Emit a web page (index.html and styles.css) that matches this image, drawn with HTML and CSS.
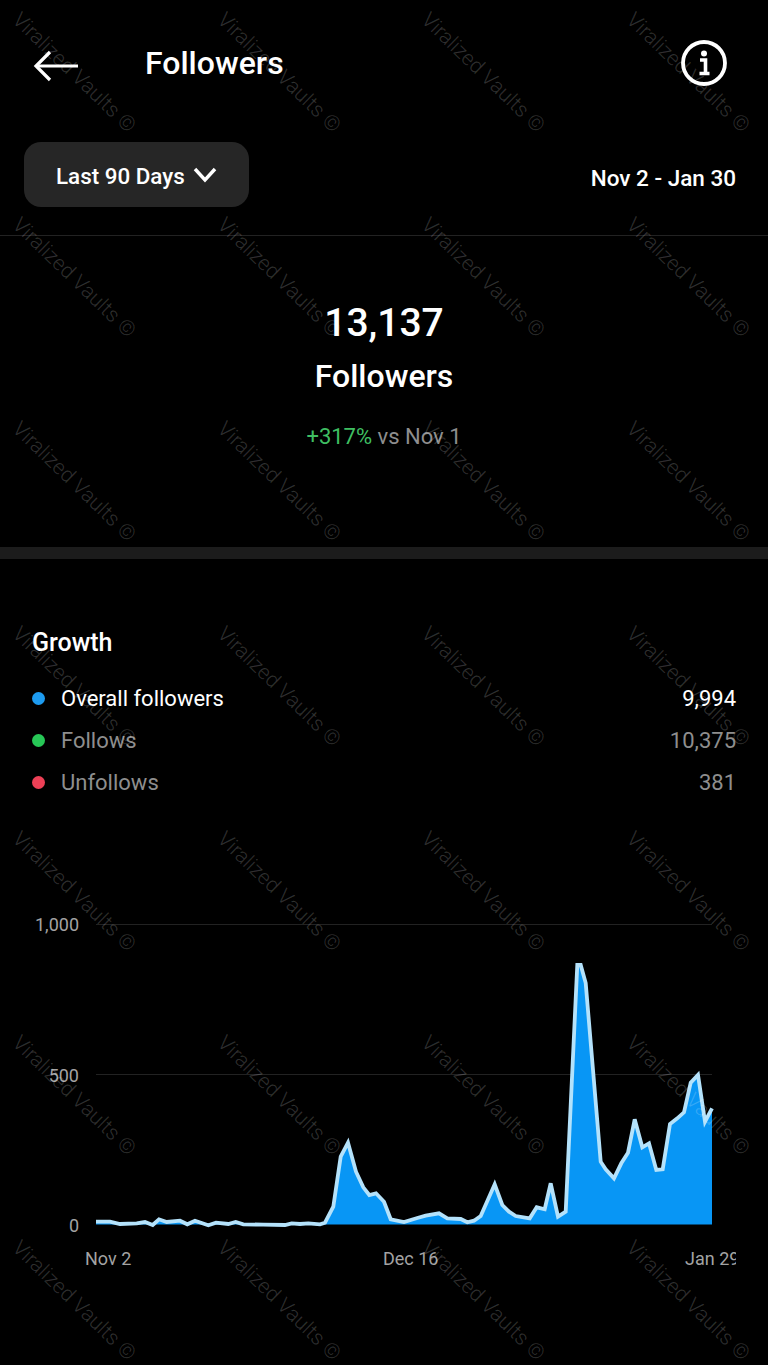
FILE: index.html
```html
<!DOCTYPE html>
<html lang="en">
<head>
  <meta charset="UTF-8" />
  <meta name="viewport" content="width=device-width, initial-scale=1.0"/>
  <title>Followers</title>
  <link rel="stylesheet" href="styles.css">
</head>
<body>
  <header class="topbar">
    <svg class="back" width="46" height="32" viewBox="0 0 46 32" fill="none" stroke="#fff" stroke-width="3.2">
      <path d="M45 16H3"/>
      <path d="M17 2 3 16l14 14"/>
    </svg>
    <h1>Followers</h1>
    <svg class="info" width="48" height="48" viewBox="0 0 48 48" fill="none">
      <circle cx="24" cy="24" r="21" stroke="#fff" stroke-width="3.8"/>
      <circle cx="24" cy="14.5" r="3" fill="#fff"/>
      <path d="M20 21h5.5v13M19.5 34.500h10" stroke="#fff" stroke-width="3.6"/>
    </svg>
  </header>

  <div class="range">
    <button class="range-btn">Last 90 Days
      <svg width="24" height="16" viewBox="0 0 24 16" fill="none" stroke="#fff" stroke-width="3.4">
        <path d="M2 2l10 11L22 2"/>
      </svg>
    </button>
    <span class="range-dates">Nov 2 - Jan 30</span>
  </div>

  <section class="summary">
    <div class="summary-num">13,137</div>
    <div class="summary-label">Followers</div>
    <div class="summary-diff"><span class="up">+317%</span> vs Nov 1</div>
  </section>

  <section class="growth">
    <h2>Growth</h2>
    <div class="legend-row active"><i class="dot blue"></i><span>Overall followers</span><b>9,994</b></div>
    <div class="legend-row"><i class="dot green"></i><span>Follows</span><b>10,375</b></div>
    <div class="legend-row"><i class="dot red"></i><span>Unfollows</span><b>381</b></div>
  </section>

  <svg class="chart" width="736" height="372" viewBox="0 900 736 372">
    <path class="grid-line" d="M96 924.500H712M96 1074.500H712"/>
    <text class="tick" x="79" y="931" text-anchor="end">1,000</text>
    <text class="tick" x="79" y="1082" text-anchor="end">500</text>
    <text class="tick" x="79" y="1232" text-anchor="end">0</text>
    <path class="area" d="M96 1224.500V1221.700L110 1221.700 120 1224 136.700 1223.300 145 1222 152.700 1225 159 1219.300 166.700 1222 180 1220.700 187.300 1224.300 195 1220.700 208.300 1225.300 216 1222.700 228.300 1224 235.700 1222 243.300 1224.300 263.300 1224.700 285 1225 291.700 1223.300 300 1224 308.300 1223.300 320 1224.300 325 1222.700 333.300 1206.700 340.700 1156.700 348 1142.700 356 1171.700 363.300 1187.300 369.300 1195 376 1193.300 384 1201.700 390.700 1219.300 404 1222 417.300 1218 425.700 1215.700 439 1213.300 447.300 1218.300 460.700 1219 467.300 1222.300 474 1220.700 480.700 1216 494.700 1184.300 502.300 1205 509 1211.700 515.700 1216 529.700 1218.300 536.700 1207.300 544.700 1209.300 550.700 1183.300 558 1216.700 565.700 1211.700 577.300 965 580.700 965 585.700 983 600.700 1161.700 605.700 1169.300 614 1178.300 621.300 1163.300 628 1152.700 634.700 1119.300 642.300 1147.300 649 1143.300 656.300 1170 662.700 1169.300 670 1124 677.300 1118.300 684 1112.300 690.700 1082.700 698 1075 705 1121.700 712 1108.300V1224.500Z"/>
    <path class="line" d="M96 1221.700L110 1221.700 120 1224 136.700 1223.300 145 1222 152.700 1225 159 1219.300 166.700 1222 180 1220.700 187.300 1224.300 195 1220.700 208.300 1225.300 216 1222.700 228.300 1224 235.700 1222 243.300 1224.300 263.300 1224.700 285 1225 291.700 1223.300 300 1224 308.300 1223.300 320 1224.300 325 1222.700 333.300 1206.700 340.700 1156.700 348 1142.700 356 1171.700 363.300 1187.300 369.300 1195 376 1193.300 384 1201.700 390.700 1219.300 404 1222 417.300 1218 425.700 1215.700 439 1213.300 447.300 1218.300 460.700 1219 467.300 1222.300 474 1220.700 480.700 1216 494.700 1184.300 502.300 1205 509 1211.700 515.700 1216 529.700 1218.300 536.700 1207.300 544.700 1209.300 550.700 1183.300 558 1216.700 565.700 1211.700 577.300 965 580.700 965 585.700 983 600.700 1161.700 605.700 1169.300 614 1178.300 621.300 1163.300 628 1152.700 634.700 1119.300 642.300 1147.300 649 1143.300 656.300 1170 662.700 1169.300 670 1124 677.300 1118.300 684 1112.300 690.700 1082.700 698 1075 705 1121.700 712 1108.300"/>
    <text class="tick" x="85" y="1265">Nov 2</text>
    <text class="tick" x="383" y="1265">Dec 16</text>
    <text class="tick" x="685" y="1265">Jan 29</text>
  </svg>

  <div class="watermarks" aria-hidden="true">
    <span>Viralized Vaults ©</span><span>Viralized Vaults ©</span><span>Viralized Vaults ©</span><span>Viralized Vaults ©</span>
    <span>Viralized Vaults ©</span><span>Viralized Vaults ©</span><span>Viralized Vaults ©</span><span>Viralized Vaults ©</span>
    <span>Viralized Vaults ©</span><span>Viralized Vaults ©</span><span>Viralized Vaults ©</span><span>Viralized Vaults ©</span>
    <span>Viralized Vaults ©</span><span>Viralized Vaults ©</span><span>Viralized Vaults ©</span><span>Viralized Vaults ©</span>
    <span>Viralized Vaults ©</span><span>Viralized Vaults ©</span><span>Viralized Vaults ©</span><span>Viralized Vaults ©</span>
    <span>Viralized Vaults ©</span><span>Viralized Vaults ©</span><span>Viralized Vaults ©</span><span>Viralized Vaults ©</span>
    <span>Viralized Vaults ©</span><span>Viralized Vaults ©</span><span>Viralized Vaults ©</span><span>Viralized Vaults ©</span>
  </div>
</body>
</html>
```

FILE: styles.css
```css
html {
  background: #000;
}

body {
  position: relative;
  width: 768px;
  height: 1365px;
  margin: 0;
  overflow: hidden;
  background: #000;
  color: #fff;
  font-family: Roboto, "Liberation Sans", sans-serif;
}

.topbar {
  display: flex;
  align-items: center;
  height: 127px;
  padding: 0 40px 0 33px;
}

.back {
  margin-top: 4px;
}

.topbar h1 {
  flex: 1;
  margin: 0 0 1px 66px;
  font-size: 32px;
  font-weight: 500;
}

.info {
  margin-bottom: 2px;
}

.range {
  display: flex;
  align-items: center;
  justify-content: space-between;
  box-sizing: border-box;
  height: 109px;
  padding: 0 32px 13px 24px;
  border-bottom: 1px solid #222;
}

.range-btn {
  display: flex;
  align-items: center;
  gap: 8px;
  width: 225px;
  height: 65px;
  padding: 3px 0 0 32px;
  border: none;
  border-radius: 17px;
  background: #262626;
  color: #fff;
  font-family: inherit;
  font-size: 22.400px;
  font-weight: 500;
}

.range-btn svg {
  margin-top: -3px;
}

.range-dates {
  margin-top: 7px;
  font-size: 22.500px;
  font-weight: 500;
}

.summary {
  display: flex;
  flex-direction: column;
  align-items: center;
  box-sizing: border-box;
  height: 323px;
  padding-top: 61px;
  border-bottom: 12px solid #1c1c1c;
}

.summary-num {
  font-size: 39px;
  font-weight: 500;
  line-height: 52px;
}

.summary-label {
  margin-top: 2px;
  font-size: 32px;
  font-weight: 500;
  line-height: 50px;
}

.summary-diff {
  margin-top: 22px;
  font-size: 22px;
  line-height: 28px;
  color: #8e8e8e;
}

.up {
  color: #3fbf62;
}

.growth {
  padding: 67px 32px 0;
}

.growth h2 {
  margin: 0 0 17px;
  font-size: 25px;
  font-weight: 500;
  line-height: 34px;
}

.legend-row {
  display: flex;
  align-items: center;
  height: 42px;
  font-size: 22px;
  color: #8e8e8e;
}

.legend-row.active {
  color: #fff;
}

.legend-row span {
  flex: 1;
}

.legend-row b {
  font-weight: 400;
}

.dot {
  width: 13px;
  height: 13px;
  margin-right: 16px;
  border-radius: 50%;
}

.blue {
  background: #1d9bf0;
}

.green {
  background: #27c756;
}

.red {
  background: #ed4056;
}

.chart {
  display: block;
  margin-top: 97px;
}

.grid-line {
  fill: none;
  stroke: #222;
  stroke-width: 1;
}

.tick {
  fill: #a3a3a3;
  font-size: 18px;
}

.area {
  fill: #0896f5;
}

.line {
  fill: none;
  stroke: #b4e2fb;
  stroke-width: 3.8;
  stroke-linejoin: miter;
}

/* watermark repeats over the whole shot */
.watermarks {
  position: absolute;
  left: 0;
  top: 0;
  box-sizing: border-box;
  width: 768px;
  height: 1365px;
  padding: 9px 0 0 23px;
  overflow: hidden;
  display: grid;
  grid-template-columns: repeat(4, 204.500px);
  grid-auto-rows: 204.700px;
  pointer-events: none;
}

.watermarks span {
  justify-self: start;
  align-self: start;
  white-space: nowrap;
  font-size: 21px;
  font-weight: 300;
  line-height: 20px;
  color: rgba(255, 255, 255, 0.19);
  transform: rotate(44deg);
  transform-origin: 0 0;
}
```
